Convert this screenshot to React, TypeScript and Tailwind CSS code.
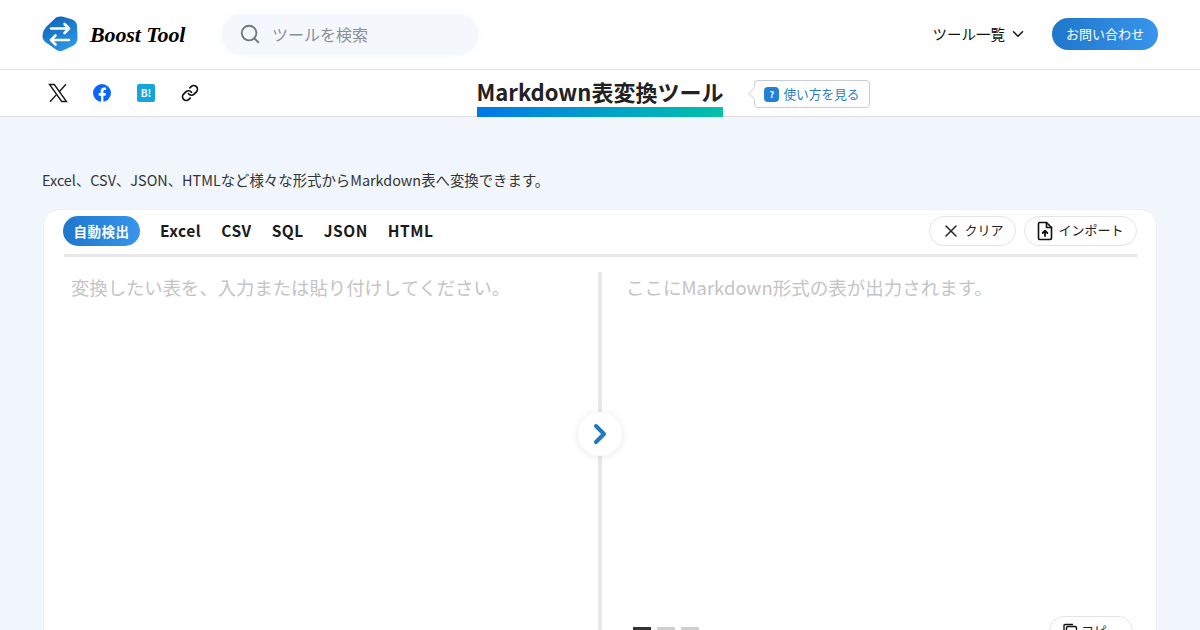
import React from 'react';
import { ChevronDown, ChevronRight, Link, Search, X } from 'lucide-react';

const TABS = ['Excel', 'CSV', 'SQL', 'JSON', 'HTML'];

const Logo: React.FC = () => (
  <svg width="36" height="36" viewBox="0 0 36 36">
    <defs>
      <linearGradient id="logoGrad" x1="0.2" y1="0" x2="0.8" y2="1">
        <stop offset="0" stopColor="#0f62b8" />
        <stop offset="1" stopColor="#2f9be6" />
      </linearGradient>
    </defs>
    <path d="M14 1.500 Q17 0 20 0.500 L29 3 Q34.500 4.500 35 10 L35.500 22 Q35.500 27 31.500 29.500 L21 34.500 Q17.500 36 14.500 34 L4 26.500 Q0 23.500 0.500 19 Q1 14.500 4 11 Z" fill="url(#logoGrad)" />
    <path d="M9 12.500 H27 M22.500 8 L27 12.500 L22.500 17 M27 24 H9 M13.500 19.500 L9 24 L13.500 28.500" stroke="#fff" strokeWidth="2.600" fill="none" strokeLinecap="round" strokeLinejoin="round" />
  </svg>
);

const XIcon: React.FC = () => (
  <svg width="20" height="20" viewBox="0 0 20 20" fill="none" stroke="#1a1a1a" strokeWidth="1.400" strokeLinejoin="miter">
    <path d="M1.500 1.500H6.300L18.500 18.500H13.700Z" />
    <path d="M18 1.200L11.200 8.800M8.700 11.400L2 18.800" />
  </svg>
);

const FacebookIcon: React.FC = () => (
  <svg width="18" height="18" viewBox="0 0 24 24">
    <circle cx="12" cy="12" r="12" fill="#0866ff" />
    <path d="M16.700 15.500l.5-3.500h-3.300V9.800c0-1 .5-1.900 2-1.900h1.500v-3s-1.400-.2-2.700-.2c-2.700 0-4.500 1.600-4.500 4.600V12H7.600v3.500h3.100V24h3.200v-8.500h2.800z" fill="#fff" />
  </svg>
);

const FileUpIcon: React.FC = () => (
  <svg width="16" height="20" viewBox="0 0 16 20" fill="none" stroke="#111" strokeWidth="1.600" strokeLinejoin="round" strokeLinecap="round">
    <path d="M2.500 1.500h7l5 5v10.500a1.500 1.500 0 0 1-1.500 1.500h-10.500a1.500 1.500 0 0 1-1-1.500v-14a1.500 1.500 0 0 1 1-1.500z" />
    <path d="M9.500 1.500v5h5" />
    <path d="M8 15v-5M5.700 12l2.300-2.300 2.300 2.300" strokeWidth="1.800" />
  </svg>
);

const CopyIcon: React.FC = () => (
  <svg width="17" height="17" viewBox="0 0 17 17" fill="none" stroke="#111" strokeWidth="1.400">
    <rect x="4.500" y="3.500" width="10" height="12" rx="1.500" />
    <path d="M2 12V2.500A1 1 0 0 1 3 1.500h8" />
  </svg>
);

const App: React.FC = () => {
  return (
    <div className="h-[630px] overflow-hidden bg-[#f1f6fc] font-['Noto_Sans_CJK_JP','Noto_Sans',sans-serif] text-[#222]">
      <header className="flex h-[70px] items-center justify-between border-b border-[#dfdfdf] bg-white pb-[1px] pl-[42px] pr-[42px]">
        <div className="flex items-center">
          <Logo />
          <span className="ml-[12px] w-[96px] whitespace-nowrap font-['Liberation_Serif',serif] text-[22px] font-bold italic tracking-[-0.1px] text-black">Boost Tool</span>
          <div className="ml-[36px] flex h-[41px] w-[256px] items-center rounded-[20px] bg-[#f4f8fd] pl-[17px] shadow-[0_0_10px_#f4f8fd]">
            <Search className="h-[22px] w-[22px] text-[#6f7780]" strokeWidth={2} />
            <span className="ml-[11px] text-[16px] text-[#8a8f96]">ツールを検索</span>
          </div>
        </div>
        <div className="flex items-center">
          <span className="text-[14.500px] text-[#111]">ツール一覧</span>
          <ChevronDown className="ml-[4px] h-[18px] w-[18px] text-[#111]" strokeWidth={2} />
          <button className="ml-[25px] flex h-[32px] w-[106px] items-center justify-center rounded-full bg-gradient-to-r from-[#1f77cc] to-[#3894ec] text-[13px] text-white">お問い合わせ</button>
        </div>
      </header>

      <div className="relative flex h-[47px] items-center border-b border-[#dfdfdf] bg-white pl-[48px]">
        <div className="flex items-center gap-[24px]">
          <div className="flex h-[20px] w-[20px] items-center justify-center"><XIcon /></div>
          <div className="flex h-[20px] w-[20px] items-center justify-center"><FacebookIcon /></div>
          <div className="flex h-[20px] w-[20px] items-center justify-center">
            <div className="flex h-[18px] w-[18px] items-center justify-center rounded-[2px] bg-[#14a4de] text-[10px] font-bold leading-none text-white">B!</div>
          </div>
          <div className="flex h-[20px] w-[20px] items-center justify-center">
            <Link className="h-[18px] w-[18px] text-[#111]" strokeWidth={2.300} />
          </div>
        </div>
        <div className="absolute left-[477px] top-0 flex h-[47px] w-[246px] flex-col items-center">
          <h1 className="h-[37px] whitespace-nowrap text-[22px] font-bold leading-[42px] text-[#222]">Markdown表変換ツール</h1>
          <div className="h-[10px] w-full bg-gradient-to-r from-[#0077e6] to-[#0cc0a8]" />
        </div>
        <div className="absolute left-[754px] top-[10px] flex h-[28px] w-[116px] items-center justify-center rounded-[4px] border border-[#c8ccd0] bg-white text-[12.700px] text-[#2b7cc4]">
          <span className="absolute left-[-5px] top-[8px] h-[9px] w-[9px] rotate-45 border-b border-l border-[#d4d7da] bg-white" />
          <span className="mr-[4px] flex h-[15px] w-[15px] items-center justify-center rounded-[4px] bg-[#2280d6] text-[9px] font-bold leading-none text-white">?</span>
          使い方を見る
        </div>
      </div>

      <main className="px-[42px] pt-[52px]">
        <p className="text-[14.400px] leading-[22px] text-[#333]">Excel、CSV、JSON、HTMLなど様々な形式からMarkdown表へ変換できます。</p>
        <section className="mx-[1px] mt-[18px] h-[460px] rounded-[16px] border border-[#edf1f6] bg-white">
          <div className="ml-[20px] mr-[19px] flex h-[47px] items-center justify-between border-b-[3px] border-[#e8e8e8] pb-[2px]">
            <div className="-ml-[1px] flex items-center">
              <span className="flex h-[30px] w-[77px] items-center justify-center rounded-full bg-gradient-to-r from-[#1f77cc] to-[#3894ec] text-[13.500px] font-bold tracking-[0.5px] text-white">自動検出</span>
              <div className="ml-[20px] flex gap-[20px] text-[15.500px] font-bold tracking-[0.5px] text-[#1a1a1a]">
                {TABS.map(tab => (
                  <span key={tab}>{tab}</span>
                ))}
              </div>
            </div>
            <div className="flex items-center gap-[8px]">
              <button className="flex h-[30px] w-[87px] items-center justify-center rounded-full border border-[#e4e4e4] bg-white text-[13px] text-[#222]">
                <X className="mr-[3px] h-[20px] w-[20px]" strokeWidth={1.800} />
                <span className="pb-[2px]">クリア</span>
              </button>
              <button className="flex h-[30px] w-[113px] items-center justify-center rounded-full border border-[#e4e4e4] bg-white text-[13px] text-[#222]">
                <span className="mr-[5px]"><FileUpIcon /></span>
                <span className="pb-[2px]">インポート</span>
              </button>
            </div>
          </div>

          <div className="relative flex h-[412px]">
            <div className="w-[554px] pl-[27px] pt-[15px] text-[18.350px] leading-[30px] text-[#c4c4c4]">変換したい表を、入力または貼り付けしてください。</div>
            <div className="mt-[15px] w-[4px] bg-[#e8e8e8]" />
            <div className="relative flex-1 pl-[24px] pt-[15px] text-[18.500px] leading-[30px] text-[#c4c4c4]">
              ここにMarkdown形式の表が出力されます。
              <div className="absolute left-[31px] top-[370px] flex gap-[6px]">
                <span className="h-[3px] w-[18px] bg-[#333]" />
                <span className="h-[3px] w-[18px] bg-[#cfcfcf]" />
                <span className="h-[3px] w-[18px] bg-[#cfcfcf]" />
              </div>
              <button className="absolute left-[447px] top-[359px] flex h-[30px] w-[84px] items-center justify-center rounded-full border border-[#e4e4e4] bg-white text-[13px] text-[#222]">
                <span className="mr-[2px]"><CopyIcon /></span>
                コピー
              </button>
            </div>
            <div className="absolute left-[534px] top-[155px] flex h-[44px] w-[44px] items-center justify-center rounded-full bg-white shadow-[0_1px_8px_rgba(0,0,0,0.09)]">
              <ChevronRight className="h-[32px] w-[32px] text-[#1f77c4]" strokeWidth={3} />
            </div>
          </div>
        </section>
      </main>
    </div>
  );
};

export default App;
